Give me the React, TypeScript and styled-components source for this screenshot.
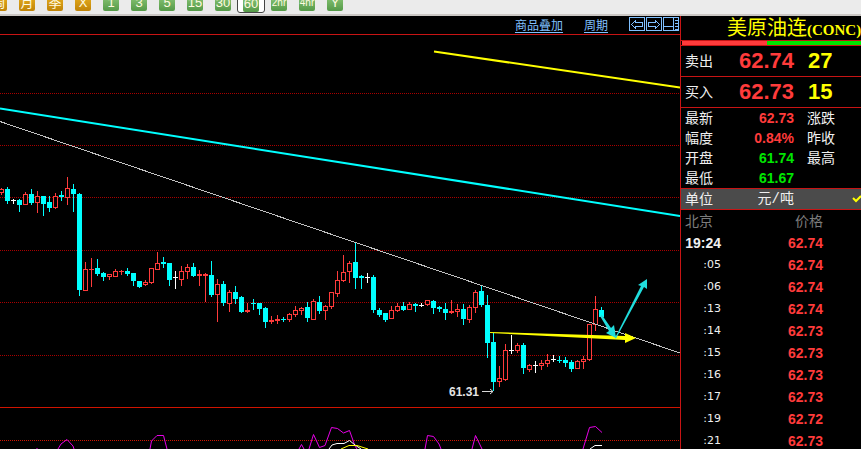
import React from "react";
import styled, { createGlobalStyle } from "styled-components";

const RED = "#ff3b3b";
const CYAN = "#00ffff";
const GREEN = "#00e600";
const LINE = "#c81414";

const sans = `"Liberation Sans", "Noto Sans CJK SC", sans-serif`;

const GlobalStyle = createGlobalStyle`
  * { box-sizing: border-box; }
  body { margin: 0; background: #000; font-family: ${sans}; }
`;

const Page = styled.div`
  display: flex;
  flex-direction: column;
  height: 100vh;
  overflow: hidden;
  background: #000;
  color: #f0f0f0;
`;

const Toolbar = styled.nav`
  display: flex;
  flex: none;
  align-items: flex-end;
  height: 16px;
  padding-bottom: 1px;
  overflow: hidden;
  background: #ebebeb;
  border-bottom: 2px solid #cbc7c4;
`;

const PeriodButton = styled.button<{ $active?: boolean }>`
  display: flex;
  flex: none;
  align-items: flex-end;
  justify-content: center;
  width: 28px;
  height: 26px;
  padding: 0 0 ${(p) => (p.$active ? 0 : 1)}px;
  border: 1px solid ${(p) => (p.$active ? "#444" : "transparent")};
  border-radius: 3px;
  background: ${(p) => (p.$active ? "#fff" : "transparent")};
  &:first-child { margin-left: -15px; }
`;

const PeriodFace = styled.span<{ $gold?: boolean; $small?: boolean }>`
  display: flex;
  align-items: center;
  justify-content: center;
  width: 16px;
  height: 16px;
  border-radius: 2px;
  background: ${(p) =>
    p.$gold
      ? "linear-gradient(#e8b020, #c08408)"
      : "linear-gradient(#8cc878, #559a48)"};
  color: #fffbe0;
  font: ${(p) => (p.$small ? 10 : 13)}px/16px ${sans};
  white-space: nowrap;
`;

const Body = styled.div`
  display: flex;
  flex: 1;
  min-height: 0;
`;

const ChartArea = styled.main`
  flex: 1;
  min-width: 0;
`;

const ChartHeader = styled.header`
  display: flex;
  align-items: center;
  justify-content: flex-end;
  gap: 21px;
  height: 19px;
  padding-right: 1px;
  border-bottom: 1px solid ${LINE};
`;

const HeaderLink = styled.a`
  padding-top: 2px;
  color: #80c0ff;
  font: 12px/16px ${sans};
  text-underline-offset: 2px;
`;

const IconGroup = styled.div`
  display: flex;
  align-self: flex-start;
  gap: 1px;
  padding-top: 1px;
`;

const IconButton = styled.button`
  display: block;
  padding: 0;
  border: 0;
  background: none;
  svg { display: block; }
`;

const ChartSvg = styled.svg`
  display: block;
  width: 100%;
  height: auto;
`;

const Panel = styled.aside`
  flex: 0 0 181px;
  min-width: 0;
  overflow: hidden;
  border-left: 1px solid ${LINE};
`;

const Title = styled.h1`
  height: 25px;
  margin: 0;
  padding-left: 46px;
  overflow: hidden;
  border-bottom: 1px solid ${LINE};
  color: #ffff00;
  font: 400 20px/25px ${sans};
  white-space: nowrap;
`;

const Code = styled.span`
  font: 700 15px/24px "Liberation Serif", serif;
`;

const RatioBar = styled.div`
  display: flex;
  height: 5px;
  padding-left: 1px;
  border-bottom: 1px solid ${LINE};
`;

const RatioPart = styled.div<{ $color: string; $share: number }>`
  flex: ${(p) => p.$share};
  background: ${(p) => p.$color};
`;

const Row = styled.div<{ $height: number }>`
  display: grid;
  grid-template-columns: 39px 70px 1fr;
  align-items: center;
  height: ${(p) => p.$height}px;
  padding-left: 4px;
  white-space: nowrap;
  font: 14px/20px ${sans};
`;

const QuoteRow = styled(Row)`
  border-bottom: 1px solid ${LINE};
`;

const UnitRow = styled(Row)`
  background: #4b4b4b;
  border-top: 1px solid ${LINE};
  border-bottom: 1px solid ${LINE};
`;

const Figure = styled.span<{ $color?: string; $big?: boolean }>`
  color: ${(p) => p.$color ?? "inherit"};
  font-size: ${(p) => (p.$big ? 22 : 14)}px;
  font-weight: 700;
  text-align: right;
`;

const Unit = styled.span`
  font-family: "Liberation Mono", "Noto Sans CJK SC", monospace;
  text-align: right;
`;

const Side = styled.span`
  padding-left: 13px;
`;

const Amount = styled(Side)`
  padding-left: 14px;
  color: #ffff00;
  font-size: 22px;
  font-weight: 700;
`;

const Tick = styled.span`
  display: flex;
  justify-content: flex-end;
`;

const Trades = styled.table`
  width: 142px;
  border-collapse: collapse;
  table-layout: fixed;
  font: 14px/22px ${sans};
  th, td { height: 22px; padding: 0; }
  th { color: #7c7c7c; font-weight: 400; text-align: right; }
`;

const TimeHead = styled.th`
  width: 40px;
`;

const TimeHeadLabel = styled.span`
  display: block;
  padding-left: 4px;
  text-align: left;
`;

const TimeCell = styled.td<{ $full?: boolean }>`
  text-align: right;
  font: ${(p) => (p.$full ? `700 14px/22px ${sans}` : `11px/22px "DejaVu Sans", sans-serif`)};
`;

const PriceCell = styled.td`
  color: ${RED};
  font-weight: 700;
  text-align: right;
`;

const periods = ["周", "月", "季", "X", "1", "3", "5", "15", "30", "60", "2hr", "4hr", "Y"];

const quotes = [
  { label: "最新", value: "62.73", color: RED, side: "涨跌" },
  { label: "幅度", value: "0.84%", color: RED, side: "昨收" },
  { label: "开盘", value: "61.74", color: GREEN, side: "最高" },
  { label: "最低", value: "61.67", color: GREEN, side: "" },
];

const trades = [
  ["19:24", "62.74"], [":05", "62.74"], [":06", "62.74"], [":13", "62.74"],
  [":14", "62.73"], [":15", "62.73"], [":16", "62.73"], [":17", "62.73"],
  [":19", "62.72"], [":21", "62.73"],
];

// One candle per entry: kind (r = up, c = down, w = flat), high, body top, body bottom, low.
const candles = `
r 188 189 193 195|c 187 189 201 204|w 199 200 201 204|c 199 200 205 212|r 192 194 205 205
c 189 194 203 205|r 191 196 203 213|c 196 196 204 216|c 196 202 208 212|r 193 196 208 209
c 191 195 197 201|r 177 188 198 205|c 184 189 194 212|c 193 194 290 296|r 262 269 291 291
r 258 269 270 287|c 259 268 274 276|c 272 273 277 281|r 274 274 277 280|r 269 271 277 277
r 270 271 272 275|c 268 271 274 276|c 273 273 281 286|c 281 281 287 288|r 280 282 285 286
r 268 268 283 284|r 252 263 270 270|c 257 262 264 268|c 263 263 280 286|w 271 277 278 289
r 266 271 280 286|r 264 267 272 279|c 263 267 276 277|r 270 274 276 286|r 273 274 276 302
c 261 275 295 297|r 279 284 295 322|c 281 284 303 306|r 290 292 304 312|c 286 292 299 304
c 296 297 312 313|r 303 310 312 313|c 299 303 304 310|c 303 303 309 315|c 307 308 322 328
r 316 320 322 324|r 315 319 321 324|c 317 319 320 322|r 313 314 320 322|r 306 310 315 317
r 307 308 311 315|c 302 307 318 322|r 299 301 320 320|c 296 302 311 314|r 305 306 311 320
r 292 292 307 309|r 271 280 294 297|r 255 272 281 282|r 261 263 272 283|c 242 262 278 289
c 275 276 278 289|w 273 277 278 283|c 275 277 310 313|c 308 310 315 317|c 313 313 320 322
r 306 310 319 319|r 303 306 311 312|c 302 306 310 311|r 302 304 310 310|c 303 304 306 312
w 303 305 306 307|r 300 300 305 306|c 300 301 308 314|c 306 307 309 312|c 303 309 313 320
r 300 311 313 314|r 304 309 312 317|c 304 309 319 325|r 305 307 320 323|r 290 292 308 313
c 285 291 305 307|c 295 305 343 358|c 333 342 382 391|r 366 378 382 387|r 344 350 380 381
w 335 350 351 354|r 343 345 351 353|c 343 345 368 374|r 364 365 370 372|w 361 365 366 373
r 360 363 366 370|r 354 360 364 367|w 355 359 360 362|c 356 360 361 363|c 357 360 363 367
c 360 362 369 372|r 360 361 369 369|r 356 359 362 369|r 324 324 360 361|r 296 309 325 331
c 307 310 317 318`
  .trim()
  .split(/[|\n]/)
  .map((entry) => {
    const [kind, ...levels] = entry.split(" ");
    return { kind, levels: levels.map(Number) };
  });

const candleColors: Record<string, string> = { r: RED, c: CYAN, w: "#ffffff" };

function Candle({ index, kind, levels }: { index: number; kind: string; levels: number[] }) {
  const [high, top, bottom, low] = levels;
  const x = 1 + index * 6;
  const hollow = kind === "r" && bottom - top > 2;
  return (
    <g fill={candleColors[kind]}>
      <rect x={x} y={high} width="1" height={low - high} />
      <rect x={x - 2} y={top} width="5" height={bottom - top} />
      {hollow && <rect x={x - 1} y={top + 1} width="3" height={bottom - top - 2} fill="#000" />}
    </g>
  );
}

function Chart() {
  return (
    <ChartSvg viewBox="0 35 680 414" role="img" aria-label="K线图">
      <g stroke="#a80000" strokeDasharray="1 1" shapeRendering="crispEdges">
        {[93, 145, 197, 250, 302, 355].map((y) => (
          <line key={y} x1="0" x2="680" y1={y + 0.5} y2={y + 0.5} />
        ))}
      </g>
      <g stroke="#d01400" shapeRendering="crispEdges">
        <line x1="0" x2="680" y1="407.5" y2="407.5" />
        <line x1="0" x2="680" y1="440.5" y2="440.5" strokeDasharray="1 1" />
      </g>
      <g shapeRendering="crispEdges">
        {candles.map((c, i) => (
          <Candle key={i} index={i} kind={c.kind} levels={c.levels} />
        ))}
      </g>
      <g fill="none">
        <path d="M0 121.5L680 353" stroke="#c0c0c0" shapeRendering="crispEdges" />
        <path d="M0 108.500L680 216" stroke={CYAN} strokeWidth="2" />
        <path d="M434 51.500L680 87.500" stroke="#ffff00" strokeWidth="2" />
      </g>
      <path d="M490 332L490 333L625 340V343L636 338L625 333V336Z" fill="#ffff00" />
      <g fill="#20dcdc">
        <path d="M600 316L602 315L611 328L614 325L616 338L606 333L609 331Z" />
        <path d="M615 338L616 338.500L644 287L647 289L647 279L638 285L641 286Z" />
      </g>
      <text x="449" y="396" fill="#e4e4e4" fontFamily="Liberation Sans, sans-serif" fontSize="12" fontWeight="700">61.31</text>
      <path d="M482 391.500H493M490 389L493 391.500L490 394" fill="none" stroke="#d8d8d8" />
      <g fill="none" strokeWidth="1">
        <g stroke="#e800e8">
          <path d="M37 449V448M58 449L61 444L67 439.500L73 446L74 449M150 449L151.500 441L157 435.500H163.500L167 449" />
          <path d="M299 449L301.500 444.500L304 449M309 449L313.500 434.500L319.500 447.500L325 445.500L331.500 427.500L337.500 428.500L343.500 433L349.500 430.500L355 446L357 449" />
          <path d="M425 449L427.500 435.500L433.500 436.500L439 444L441 449M472 449L475.500 435.500L482 449M583 449L589.500 427.500L595.500 426.500L602 432.500" />
        </g>
        <path d="M329 449L332 445L337 443.500H344L349.500 440.500L355 445L361 449M590 449L595 445.500H602" stroke="#ffffff" />
        <path d="M341 449L349 445.500H357L368 449" stroke="#ffff00" />
      </g>
    </ChartSvg>
  );
}

const headerIcons = [
  { label: "后退", d: "M2.500 7.500L6.500 3.500V5.500H13.500V9.500H6.500V11.500Z" },
  { label: "前进", d: "M13.500 7.500L9.500 3.500V5.500H2.500V9.500H9.500V11.500Z" },
  { label: "布局", d: "M0 9.500H10.500M10.500 0V14M12 3.500H15M12 6.500H15M12 9.500H15M12 12.500H15" },
];

export default function App() {
  return (
    <>
      <GlobalStyle />
      <Page>
        <Toolbar aria-label="周期">
          {periods.map((p, i) => (
            <PeriodButton key={p} type="button" $active={p === "60"} aria-pressed={p === "60"}>
              <PeriodFace $gold={i < 4} $small={p.length > 2}>{p}</PeriodFace>
            </PeriodButton>
          ))}
        </Toolbar>
        <Body>
          <ChartArea>
            <ChartHeader>
              <HeaderLink href="#overlay">商品叠加</HeaderLink>
              <HeaderLink href="#period">周期</HeaderLink>
              <IconGroup>
                {headerIcons.map((icon) => (
                  <IconButton key={icon.label} type="button" aria-label={icon.label}>
                    <svg width="16" height="14" viewBox="0 0 16 14" fill="none" stroke="#80c0ff" shapeRendering="crispEdges">
                      <rect x="0.5" y="0.5" width="15" height="13" />
                      <path d={icon.d} />
                    </svg>
                  </IconButton>
                ))}
              </IconGroup>
            </ChartHeader>
            <Chart />
          </ChartArea>
          <Panel>
            <Title>美原油连<Code>(CONC)</Code></Title>
            <RatioBar>
              <RatioPart $color={RED} $share={85} />
              <RatioPart $color={GREEN} $share={94} />
            </RatioBar>
            <QuoteRow $height={31}>
              <span>卖出</span><Figure $big $color={RED}>62.74</Figure><Amount>27</Amount>
            </QuoteRow>
            <QuoteRow $height={31}>
              <span>买入</span><Figure $big $color={RED}>62.73</Figure><Amount>15</Amount>
            </QuoteRow>
            {quotes.map((q) => (
              <Row key={q.label} $height={20}>
                <span>{q.label}</span><Figure $color={q.color}>{q.value}</Figure><Side>{q.side}</Side>
              </Row>
            ))}
            <UnitRow $height={22}>
              <span>单位</span><Unit>元/吨</Unit>
              <Tick>
                <svg width="9" height="8" viewBox="0 0 9 8" fill="none" stroke="#ffff00" strokeWidth="2">
                  <path d="M1 3L4 6L9 1" />
                </svg>
              </Tick>
            </UnitRow>
            <Trades>
              <thead>
                <tr>
                  <TimeHead scope="col"><TimeHeadLabel>北京</TimeHeadLabel></TimeHead>
                  <th scope="col">价格</th>
                </tr>
              </thead>
              <tbody>
                {trades.map(([time, price]) => (
                  <tr key={time}>
                    <TimeCell $full={time.length > 3}>{time}</TimeCell>
                    <PriceCell>{price}</PriceCell>
                  </tr>
                ))}
              </tbody>
            </Trades>
          </Panel>
        </Body>
      </Page>
    </>
  );
}
